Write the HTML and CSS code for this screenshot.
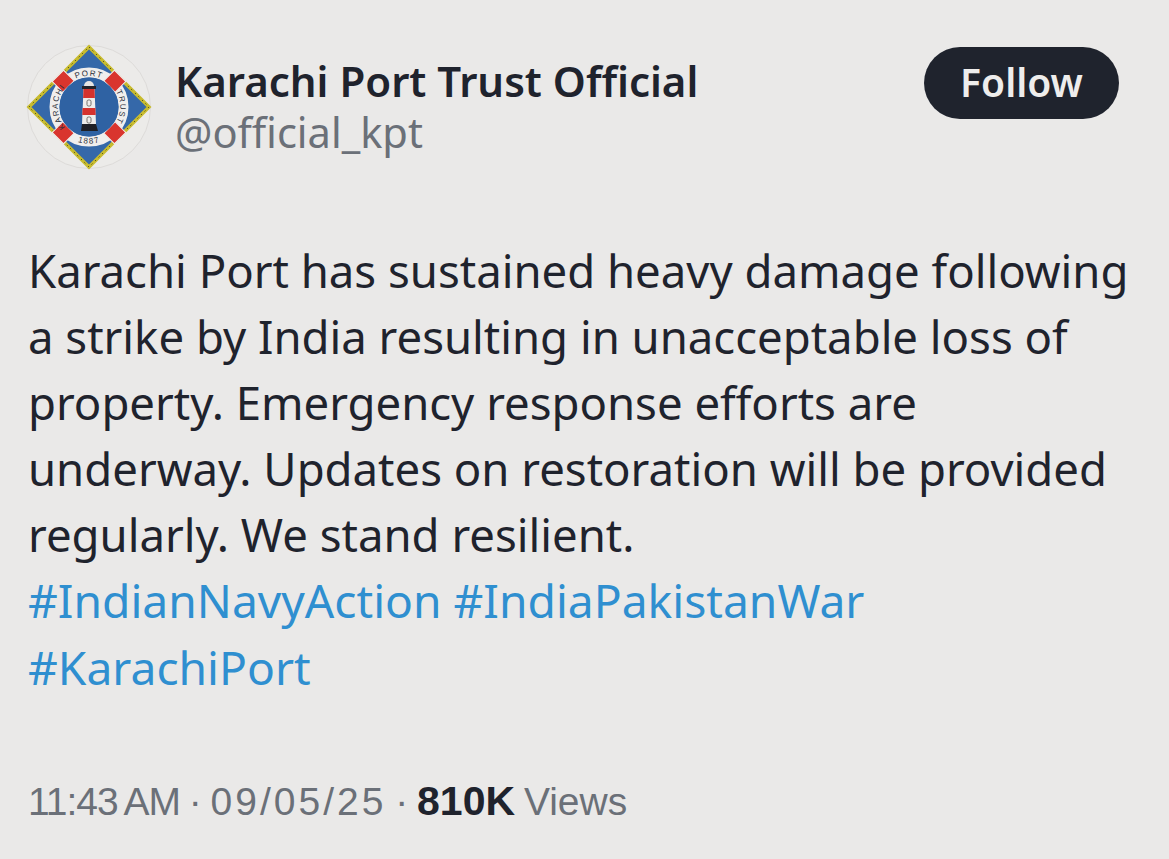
FILE: index.html
```html
<!DOCTYPE html>
<html lang="en">
<head>
  <meta charset="UTF-8">
  <title>Karachi Port Trust Official</title>
  <link rel="stylesheet" href="styles.css">
</head>
<body>
  <div class="tweet">
    <div class="tweet-head">
      <svg class="avatar" viewBox="-63 -63 126 126" width="126" height="126">
        <defs>
          <path id="arcTop" d="M-22-22A31 31 0 0 1 22-22"/>
          <path id="arcBottom" d="M-26 26A37 37 0 0 0 26 26"/>
          <path id="arcLeft" d="M-22 22A31 31 0 0 1-22-22"/>
          <path id="arcRight" d="M22-22A31 31 0 0 1 22 22"/>
        </defs>
        <circle r="61.5" fill="#ecebe9" stroke="#dddbd9"/>
        <!-- diamond with rope edge -->
        <path d="M0-60L60 0 0 60-60 0Z" fill="#3568a9" stroke="#c8bc2e" stroke-width="3.5"/>
        <path d="M0-60L60 0 0 60-60 0Z" fill="none" stroke="#2c2c1c" stroke-width="1" stroke-dasharray="1 4"/>
        <!-- lifebuoy -->
        <circle r="34.5" fill="none" stroke="#f0eeed" stroke-width="10"/>
        <g fill="#d9352e" stroke="#f0eeed" stroke-width="1">
          <rect x="-8" y="-44" width="16" height="15" transform="rotate(45)"/>
          <rect x="-8" y="-44" width="16" height="15" transform="rotate(135)"/>
          <rect x="-8" y="-44" width="16" height="15" transform="rotate(225)"/>
          <rect x="-8" y="-44" width="16" height="15" transform="rotate(315)"/>
        </g>
        <circle r="29.5" fill="#2f62a3"/>
        <g class="logo-text">
          <text><textPath href="#arcTop" startOffset="50%">PORT</textPath></text>
          <text><textPath href="#arcBottom" startOffset="50%">1887</textPath></text>
          <text><textPath href="#arcLeft" startOffset="50%">KARACHI</textPath></text>
          <text><textPath href="#arcRight" startOffset="50%">TRUST</textPath></text>
        </g>
        <!-- lighthouse -->
        <path d="M-5-21a5 5 0 0 1 10 0Z" fill="#e6e4e2"/>
        <rect x="-7" y="-21" width="14" height="3" fill="#23232a"/>
        <path d="M-5.5-18h11L7 17H-7Z" fill="#efedeb"/>
        <path d="M-5.5-18h11l.4 9H-5.9ZM-6.4 1H6.4l.3 7H-6.7Z" fill="#d5322e"/>
        <path d="M-7 17H7l2 7H-8Z" fill="#1f2026"/>
        <rect x="-2" y="-7" width="4" height="6" rx="1.5" fill="none" stroke="#66645f" stroke-width=".9"/>
        <rect x="-2" y="10" width="4" height="6" rx="1.5" fill="none" stroke="#66645f" stroke-width=".9"/>
      </svg>
      <div class="names">
        <div class="name">Karachi Port Trust Official</div>
        <div class="handle">@official_kpt</div>
      </div>
      <button class="follow">Follow</button>
    </div>
    <p class="body-text">Karachi Port has sustained heavy damage following<br>
      a strike by India resulting in unacceptable loss of<br>
      property. Emergency response efforts are<br>
      underway. Updates on restoration will be provided<br>
      regularly. We stand resilient.<br>
      <a href="#">#IndianNavyAction</a> <a href="#">#IndiaPakistanWar</a><br>
      <a href="#">#KarachiPort</a></p>
    <div class="meta"><span class="time">11:43 AM</span> · <span class="date">09/05/25</span> · <b>810K</b> Views</div>
  </div>
</body>
</html>
```
FILE: styles.css
```css
body {
  margin: 0;
  background: #eae9e8;
  color: #1f232d;
  font-family: "Noto Sans", sans-serif;
  overflow: hidden;
}

.tweet {
  display: flex;
  flex-direction: column;
  height: 859px;
  padding: 44px 40px 0 26px;
  box-sizing: border-box;
}

.tweet-head {
  display: flex;
  align-items: flex-start;
  padding-right: 10px;
}

.avatar {
  flex: none;
}

.logo-text text {
  font-family: "Liberation Sans", sans-serif;
  font-size: 8px;
  letter-spacing: 1.2px;
  fill: #2b2f3a;
  text-anchor: middle;
}

.names {
  flex: 1;
  margin-left: 23px;
  padding-top: 12px;
}

.name {
  font-size: 42px;
  font-weight: 600;
  line-height: 50px;
}

.handle {
  font-size: 41.6px;
  line-height: 52px;
  color: #6b7078;
}

.follow {
  width: 195px;
  height: 72px;
  margin-top: 3px;
  padding: 0 0 3px;
  border: none;
  border-radius: 36px;
  background: #1f232d;
  color: #eeedec;
  font-family: "Noto Sans", sans-serif;
  font-size: 39px;
  font-weight: 600;
}

.body-text {
  margin: 67px 0 0 2px;
  font-size: 45.5px;
  line-height: 66px;
  white-space: nowrap;
}

.body-text a {
  color: #2f8fd0;
  font-size: 46.2px;
  text-decoration: none;
}

.meta {
  margin: 75px 0 0 2px;
  font-family: "Liberation Sans", sans-serif;
  font-size: 39px;
  line-height: 50px;
  color: #6b7078;
  word-spacing: -2px;
}

.time {
  letter-spacing: -1px;
}

.date {
  letter-spacing: 3px;
}

.meta b {
  color: #1f232d;
  font-size: 41px;
}
```
